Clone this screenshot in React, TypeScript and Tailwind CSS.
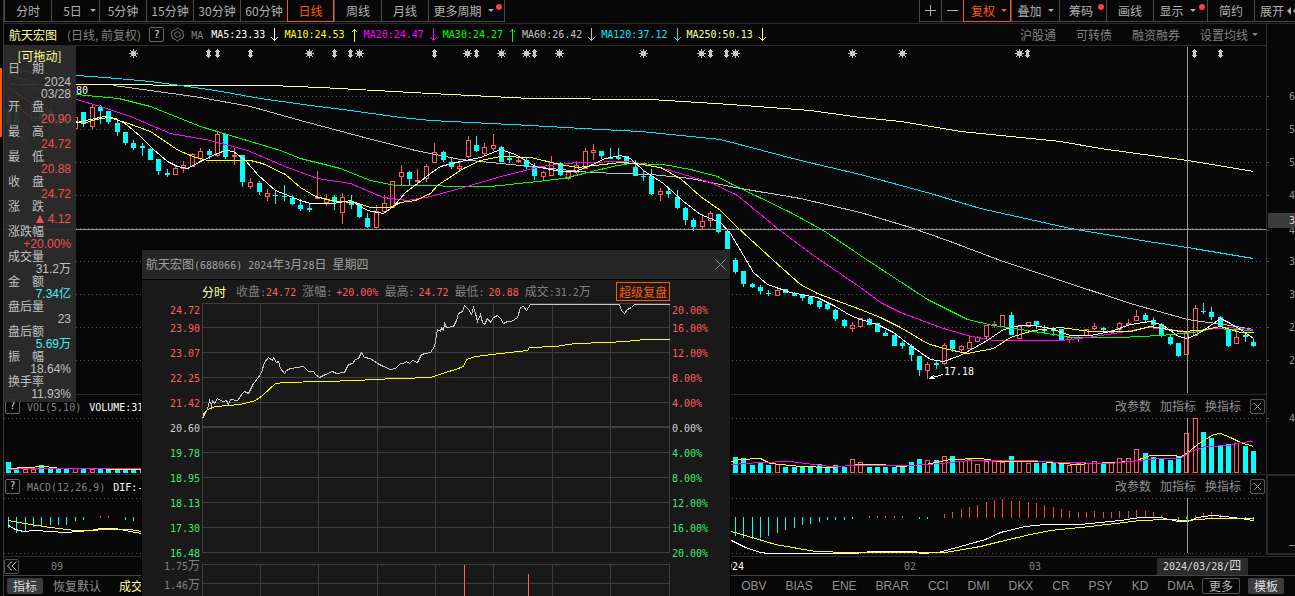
import React from "react";

type Candle = [boolean, number, number, number, number];
type Point = [number, number];

const UP = "#ff5c5c";
const DOWN = "#00ffff";

// [up, high, low, body top, body bottom]
const candles: Candle[] = [
  [false, 108, 128, 110, 125], [false, 108, 134, 110, 126], [true, 118, 146, 124, 138], [true, 100, 124, 104, 120],
  [false, 108, 126, 111, 122], [false, 106, 124, 110, 118], [false, 118, 130, 120, 126], [false, 118, 129, 122, 124],
  [true, 116, 129, 117, 128], [false, 112, 127, 112, 124], [true, 104, 129, 107, 126], [false, 105, 124, 107, 111],
  [false, 111, 124, 111, 122], [false, 121, 136, 123, 132], [false, 132, 145, 132, 143], [false, 140, 150, 143, 148],
  [false, 143, 156, 146, 148], [false, 148, 160, 149, 160], [false, 159, 175, 159, 171], [false, 169, 177, 173, 175],
  [true, 165, 174, 168, 174], [true, 161, 173, 165, 168], [true, 153, 167, 154, 166], [true, 148, 161, 151, 158],
  [false, 149, 159, 151, 155], [true, 131, 157, 134, 155], [false, 133, 159, 134, 157], [true, 148, 165, 155, 156],
  [false, 155, 187, 155, 182], [true, 178, 189, 182, 186], [false, 181, 195, 183, 192], [true, 189, 201, 193, 196],
  [false, 190, 204, 195, 196], [false, 185, 201, 196, 197], [false, 195, 205, 198, 204], [false, 199, 211, 205, 209],
  [false, 203, 212, 208, 210], [true, 171, 199, 197, 198], [true, 194, 206, 199, 202], [false, 195, 210, 197, 202],
  [true, 193, 224, 197, 212], [false, 195, 209, 201, 205], [false, 203, 218, 204, 217], [false, 213, 228, 218, 227],
  [true, 205, 227, 211, 227], [true, 195, 211, 203, 211], [true, 181, 207, 181, 207], [true, 165, 185, 172, 176],
  [false, 171, 185, 172, 179], [true, 169, 185, 180, 181], [true, 164, 182, 166, 178], [true, 143, 162, 152, 162],
  [false, 151, 162, 152, 160], [false, 158, 169, 162, 167], [true, 162, 172, 166, 168], [true, 136, 158, 140, 156],
  [false, 136, 152, 145, 151], [true, 143, 155, 147, 153], [true, 134, 151, 145, 148], [false, 146, 162, 147, 162],
  [false, 152, 163, 158, 160], [true, 156, 163, 160, 161], [false, 158, 169, 160, 167], [false, 163, 180, 166, 176],
  [true, 171, 181, 172, 176], [true, 156, 175, 162, 175], [false, 162, 176, 163, 175], [true, 170, 180, 172, 178],
  [true, 161, 174, 165, 172], [true, 148, 168, 151, 168], [true, 144, 160, 150, 152], [false, 151, 159, 151, 156],
  [false, 148, 159, 157, 159], [false, 148, 160, 157, 159], [false, 156, 164, 156, 164], [false, 160, 176, 167, 176],
  [false, 170, 181, 176, 177], [false, 169, 195, 176, 194], [true, 188, 201, 191, 194], [false, 188, 198, 191, 194],
  [false, 190, 209, 197, 208], [false, 207, 225, 208, 220], [false, 218, 231, 220, 227], [true, 214, 229, 221, 226],
  [true, 211, 227, 213, 220], [false, 214, 233, 214, 232], [false, 231, 249, 231, 249], [false, 258, 274, 260, 272],
  [false, 271, 287, 271, 284], [false, 283, 288, 284, 287], [false, 285, 294, 287, 291], [false, 290, 296, 293, 294],
  [true, 288, 295, 290, 295], [false, 289, 293, 289, 293], [false, 292, 296, 293, 296], [false, 295, 301, 295, 298],
  [false, 297, 305, 297, 304], [false, 300, 309, 301, 307], [false, 302, 310, 304, 309], [false, 309, 321, 310, 319],
  [false, 319, 328, 320, 326], [true, 322, 332, 325, 328], [true, 318, 328, 318, 326], [false, 318, 325, 319, 325],
  [false, 323, 332, 323, 332], [false, 330, 336, 333, 336], [false, 335, 346, 335, 346], [false, 341, 349, 343, 346],
  [false, 344, 361, 346, 355], [false, 356, 376, 356, 370], [true, 362, 379, 364, 370], [false, 360, 369, 363, 365],
  [true, 343, 365, 345, 363], [false, 340, 352, 340, 349], [true, 345, 352, 346, 349], [true, 335, 349, 342, 348],
  [true, 336, 342, 337, 341], [true, 325, 339, 325, 336], [true, 321, 328, 324, 325], [true, 315, 326, 315, 326],
  [false, 312, 335, 315, 335], [true, 326, 338, 326, 338], [true, 322, 326, 322, 326], [false, 321, 329, 321, 325],
  [false, 325, 333, 329, 331], [false, 327, 336, 328, 331], [false, 329, 340, 329, 340], [true, 335, 343, 337, 339],
  [true, 335, 342, 337, 338], [true, 329, 335, 329, 335], [true, 323, 330, 326, 328], [false, 327, 331, 328, 330],
  [true, 330, 334, 331, 332], [true, 322, 332, 323, 329], [true, 319, 326, 323, 324], [true, 310, 321, 316, 320],
  [false, 313, 322, 315, 320], [false, 317, 326, 320, 325], [false, 323, 337, 324, 336], [false, 335, 345, 337, 344],
  [false, 343, 357, 343, 356], [true, 332, 354, 332, 354], [true, 305, 335, 308, 335], [false, 303, 314, 311, 312],
  [false, 307, 320, 312, 317], [false, 316, 327, 317, 327], [false, 328, 347, 330, 346], [true, 330, 344, 337, 343],
  [false, 332, 342, 335, 337], [false, 338, 347, 342, 346],
];

const maLines: { color: string; points: string }[] = [
  { color: "#ffff99", points: "8,84 76,84 140,84 165,85 270,85 320,87 430,93 530,98 650,99 730,104 810,110 860,117 900,121 960,131 1010,136 1060,141 1100,148 1187,160 1253,171" },
  { color: "#00e5ff", points: "8,70 76,75 105,77 150,81 180,85 215,90 260,98 310,105 350,110 400,117 430,120 530,125 600,129 640,131 720,139 762,150 800,160 860,174 930,193 980,208 1070,228 1141,240 1187,247 1253,258" },
  { color: "#c0c0c0", points: "113,85 150,90 200,97 250,106 300,120 360,136 415,150 430,153 460,159 500,163 530,166 590,172 650,174 690,178 740,188 800,198 860,212 910,227 947,240 1000,260 1060,280 1130,303 1187,319 1230,325 1253,329" },
  { color: "#00ff00", points: "8,74 40,84 76,94 118,98 150,106 200,126 280,150 300,158 340,168 370,180 395,185 430,185 455,186 490,186 537,181 563,178 583,173 617,165 630,163 663,164 690,169 717,176 730,183 757,196 790,212 823,230 860,255 927,299 967,319 993,325 1040,332 1073,337 1120,337 1160,335 1193,332 1213,328 1253,330" },
  { color: "#ff00ff", points: "8,82 50,91 76,99 100,106 130,116 170,133 210,140 247,150 287,167 317,178 350,183 383,197 407,200 430,196 463,187 497,177 540,166 577,162 630,161 663,168 710,182 737,195 777,228 813,255 860,287 880,302 900,312 940,327 967,335 993,340 1060,340 1087,337 1120,332 1147,327 1187,331 1227,327 1253,329" },
  { color: "#ffff00", points: "8,87 30,102 60,116 76,121 83,123 95,119 108,117 125,122 150,131 178,150 195,157 208,160 250,160 262,163 285,174 300,187 315,196 335,201 355,202 370,207 390,207 400,202 415,200 430,193 437,185 463,168 480,160 500,156 530,157 560,164 577,167 620,162 635,163 660,167 680,178 700,196 720,210 737,227 760,248 773,260 800,284 817,293 833,299 860,309 880,317 900,327 927,343 943,348 967,353 993,348 1010,337 1033,330 1060,327 1090,331 1130,331 1150,326 1180,331 1200,330 1220,326 1240,332 1253,332" },
  { color: "#ffffff", points: "8,98 30,117 60,120 76,122 104,116 115,118 126,124 140,136 153,149 167,161 177,166 187,168 200,161 217,153 225,150 233,151 245,160 258,175 275,190 300,200 310,203 333,203 350,200 367,210 383,213 393,206 405,192 417,183 430,173 440,166 460,161 480,157 500,149 515,154 535,166 560,171 575,171 590,165 605,158 620,155 630,158 643,170 663,183 683,201 700,214 720,222 730,233 743,255 753,272 767,284 790,292 817,297 835,306 850,315 860,319 877,324 893,332 910,345 930,359 943,361 960,355 985,341 1003,329 1020,325 1033,325 1050,328 1070,335 1090,335 1110,331 1130,324 1150,321 1163,325 1178,336 1187,338 1200,332 1213,323 1220,318 1230,323 1243,331 1253,338" },
];

const volumeLeft = [462, 468, 469, 469, 465, 469, 468, 469, 468, 469, 469, 469, 468, 468, 468, 468, 469];
const volumeRight = [
  457, 458, 465, 462, 465, 464, 467, 467, 467, 467, 464, 467, 465, 467, 459, 462, 467, 467, 467, 467, 467, 462, 459,
  460, 460, 456, 456, 461, 459, 464, 461, 461, 462, 456, 460, 463, 463, 463, 462, 463, 465, 463, 463, 461, 463, 463,
  458, 458, 449, 453, 457, 458, 460, 456, 433, 418, 432, 438, 445, 444, 443, 446, 451,
];
const volumes: Point[] = [
  ...volumeLeft.map((y, i): Point => [i, y]),
  ...volumeRight.map((y, i): Point => [i + 87, y]),
];

const macdBars: Point[] = [
  [0, 527], [1, 532], [2, 531], [3, 526], [4, 526], [5, 524], [6, 524], [7, 524], [8, 520], [9, 519],
  [11, 516], [12, 516], [14, 519], [15, 520],
  [87, 535], [88, 537], [89, 538], [90, 537], [91, 535], [92, 532], [93, 529], [94, 527], [95, 524], [96, 523],
  [97, 521], [98, 519], [99, 519], [100, 519], [101, 518], [103, 516], [104, 516], [105, 516], [106, 516], [107, 516],
  [109, 518], [110, 518], [112, 514], [113, 512], [114, 509], [115, 507], [116, 505], [117, 502], [118, 500],
  [119, 499], [120, 501], [121, 501], [122, 502], [123, 503], [124, 505], [125, 507], [126, 509], [127, 511],
  [128, 512], [129, 512], [130, 511], [131, 512], [132, 512], [133, 511], [134, 511], [135, 510], [136, 511],
  [137, 512], [138, 515], [140, 520], [141, 518], [142, 515], [143, 513], [144, 512], [145, 514], [147, 518],
  [148, 519], [149, 520],
];

const suns = [133, 309, 359, 467, 501, 526, 559, 643, 701, 735, 852, 902, 1019];
const arrowsUpDown = [208, 217, 250, 334, 350, 434, 476, 534, 710, 726, 1027, 1194, 1220];
const gridRows = [96, 129, 162, 195, 228, 261, 294, 327, 360];

const barX = (i: number) => Math.round(8 + i * 8.357);

// CJK runs at 12px, everything else in a half-width mono face
function Mixed({ text }: { text: string }) {
  const parts = text.split(/([\u3000-\u9fff\uff00-\uffef]+)/).filter(Boolean);
  return (
    <>
      {parts.map((p, i) =>
        /[\u3000-\u9fff\uff00-\uffef]/.test(p) ? (
          <span key={i}>{p}</span>
        ) : (
          <span key={i} className="font-['DejaVu_Sans_Mono',monospace] text-[10px] whitespace-pre">{p}</span>
        )
      )}
    </>
  );
}

function Caret() {
  return <span className="border-x-[3px] border-t-[3px] border-x-transparent border-t-current" />;
}

function Dot() {
  return <span className="absolute top-1 right-0.5 size-1.5 rounded-full bg-[#ff4040]" />;
}

function Arrow({ up }: { up?: boolean }) {
  return (
    <svg width="7" height="14" viewBox="0 0 7 14" fill="none" stroke="currentColor" shapeRendering="crispEdges">
      <path d={up ? "M3.5 14V1M0.5 4.5L3.5 1.5L6.5 4.5" : "M3.5 0V13M0.5 9.5L3.5 12.5L6.5 9.5"} />
    </svg>
  );
}

function Help() {
  return (
    <button
      aria-label="帮助"
      className="flex size-[15px] items-center justify-center rounded-xs border border-[#666] font-['DejaVu_Sans_Mono',monospace] text-[10px] text-[#ddd]"
    >
      ?
    </button>
  );
}

const periods = ["分时", "5日", "5分钟", "15分钟", "30分钟", "60分钟", "日线", "周线", "月线"];

const tools = [
  { label: "复权", width: "w-12 pl-1", caret: true, active: true },
  { label: "叠加", width: "w-12", caret: true },
  { label: "筹码", width: "w-[47px] pr-1", dot: true },
  { label: "画线", width: "w-[47px]" },
  { label: "显示", width: "w-[54px] pr-1.5", caret: true, dot: true },
  { label: "简约", width: "w-[47px]" },
];

function Toolbar() {
  const base = "relative flex shrink-0 items-center justify-center h-[22px] whitespace-nowrap ";
  const idle = "border-l border-b border-[#4a4a4a] text-[#b0b0b0]";
  const active = "border border-t-0 border-[#ff5a00] text-[#ff5a00]";
  return (
    <nav className="flex h-6 justify-between overflow-hidden border-b border-[#2a2a2a]">
      <div className="flex">
        {periods.map(p => (
          <button
            key={p}
            className={base + "gap-2 " + (p === "5日" ? "w-12 pl-2 " : "w-[47px] ") + (p === "日线" ? active : idle)}
          >
            {p}
            {p === "5日" && <Caret />}
          </button>
        ))}
        <button className={base + "w-[77px] gap-1.5 border-r pr-1.5 " + idle}>
          更多周期
          <Caret />
          <Dot />
        </button>
      </div>
      <div className="flex">
        <button aria-label="放大" className={base + "w-[22px] " + idle}>
          <svg width="11" height="11" stroke="currentColor" shapeRendering="crispEdges"><path d="M5.5 0V11M0 5.5H11" /></svg>
        </button>
        <button aria-label="缩小" className={base + "w-[22px] " + idle}>
          <svg width="11" height="11" stroke="currentColor" shapeRendering="crispEdges"><path d="M0 5.5H11" /></svg>
        </button>
        {tools.map(t => (
          <button key={t.label} className={base + "gap-1.5 " + t.width + " " + (t.active ? active : idle)}>
            {t.label}
            {t.caret && <Caret />}
            {t.dot && <Dot />}
          </button>
        ))}
        <button className={base + "w-[41px] justify-start gap-0.5 overflow-hidden pl-[5px] " + idle}>
          展开
          <svg className="shrink-0" width="12" height="8" fill="currentColor"><path d="M5 0V8L1 4ZM11 0V8L7 4Z" /></svg>
        </button>
      </div>
    </nav>
  );
}

const averages = [
  { text: "MA5:23.33", color: "text-white" },
  { text: "MA10:24.53", color: "text-[#ffff00]", up: true },
  { text: "MA20:24.47", color: "text-[#ff00ff]" },
  { text: "MA30:24.27", color: "text-[#00ff00]", up: true },
  { text: "MA60:26.42", color: "text-[#c0c0c0]" },
  { text: "MA120:37.12", color: "text-[#00e5ff]" },
  { text: "MA250:50.13", color: "text-[#ffff99]" },
];

function IndicatorRow() {
  return (
    <div className="flex h-[22px] items-center border-b border-[#2a2a2a] pr-2 pl-[5px] whitespace-nowrap">
      <h1 className="text-[#ffffa0]">航天宏图</h1>
      <span className="mr-2 ml-2.5 text-[#808080]">(日线, 前复权)</span>
      <Help />
      <button aria-label="设置" className="mx-1.5">
        <svg width="15" height="15" viewBox="0 0 15 15" fill="none" stroke="#777">
          <path d="M7.5 1L9.5 2.5L13 4V7L13.5 8L13 11L9.5 12.5L7.5 14L5.5 12.5L2 11V8L1.5 7L2 4L5.5 2.5Z" />
          <circle cx="7.5" cy="7.5" r="2.8" />
        </svg>
      </button>
      <span className="mr-2 text-[#808080]"><Mixed text="MA" /></span>
      {averages.map(a => (
        <span key={a.text} className={"mr-1.5 flex items-center gap-1.5 " + a.color}>
          <Mixed text={a.text} />
          <Arrow up={a.up} />
        </span>
      ))}
      <div className="ml-auto flex gap-5 text-[#808080]">
        <a href="#hgt">沪股通</a>
        <a href="#kzz">可转债</a>
        <a href="#rzrq">融资融券</a>
        <button className="flex items-center gap-1">设置均线<Caret /></button>
      </div>
    </div>
  );
}

function PriceChart() {
  return (
    <svg className="block h-full w-full" viewBox="4 46 1262 348" preserveAspectRatio="none" shapeRendering="crispEdges">
      {gridRows.map(y => (
        <line key={y} x1="4" x2="1263" y1={y + 0.5} y2={y + 0.5} stroke="#555" strokeDasharray="1 3" />
      ))}
      {suns.map(x => (
        <g key={x} stroke="#c8c8c8">
          <path d={`M${x + 0.5} 49V58M${x - 4} 53.5H${x + 5}M${x - 3} 50L${x + 4} 57M${x + 4} 50L${x - 3} 57`} />
          <rect x={x - 2} y="51" width="5" height="5" fill="#c8c8c8" stroke="none" />
        </g>
      ))}
      {arrowsUpDown.map(x => (
        <path key={x} fill="#c8c8c8" d={`M${x + 0.5} 49L${x + 3} 52H${x + 2}V55H${x + 3}L${x + 0.5} 58L${x - 2} 55H${x - 1}V52H${x - 2}Z`} />
      ))}
      {candles.map(([up, high, low, top, bottom], i) => {
        const x = barX(i);
        const h = Math.max(bottom - top, 1);
        return up ? (
          <g key={i} fill="none" stroke={UP}>
            <path d={`M${x + 0.5} ${high}V${top}M${x + 0.5} ${bottom}V${low}`} />
            <rect x={x - 1.5} y={top + 0.5} width="4" height={h} />
          </g>
        ) : (
          <g key={i} fill={DOWN}>
            <rect x={x} y={high} width="1" height={low - high} />
            <rect x={x - 2} y={top} width="5" height={h} />
          </g>
        );
      })}
      <g fill="none" transform="translate(0.5 0.5)">
        {maLines.map(l => (
          <polyline key={l.color} points={l.points} stroke={l.color} />
        ))}
      </g>
      <text x="76" y="94" fill="#fff" className="font-['DejaVu_Sans_Mono',monospace] text-[10px]">80</text>
      <path d="M929 378.5L943 374.5M929 378.5L934 375.5M929 378.5H935" stroke="#fff" fill="none" />
      <text x="944" y="375" fill="#fff" className="font-['DejaVu_Sans_Mono',monospace] text-[10px]">17.18</text>
      <path d="M4 229.5H1266M1187.5 47V393" stroke="#999" />
    </svg>
  );
}

function VolumeChart() {
  return (
    <svg className="block h-14 w-full" viewBox="4 418 1262 56" preserveAspectRatio="none" shapeRendering="crispEdges">
      <path d="M4 418.5H1263M4 472.5H1263" stroke="#555" strokeDasharray="1 3" />
      {volumes.map(([i, y]) =>
        candles[i][0] ? (
          <rect key={i} x={barX(i) - 1.5} y={y + 0.5} width="4" height={472 - y} fill="none" stroke={UP} />
        ) : (
          <rect key={i} x={barX(i) - 2} y={y} width="5" height={473 - y} fill={DOWN} />
        )
      )}
      <g fill="none" transform="translate(0.5 0.5)">
        <polyline stroke="#ffff00" points="8,468 25,467 45,466 60,468 90,468 120,469 141,469 731,461 740,459 760,458 770,463 800,466 830,467 860,464 880,464 900,466 925,464 950,459 980,458 1000,461 1040,461 1075,464 1110,462 1133,461 1150,455 1175,455 1180,457 1190,450 1197,444 1205,439 1213,434 1220,433 1230,437 1240,442 1253,446" />
        <polyline stroke="#ff00ff" points="8,469 30,468 90,468 141,468 731,464 760,462 790,461 805,463 830,466 860,465 910,465 940,463 970,460 1030,460 1060,462 1110,463 1130,461 1160,458 1180,458 1190,451 1205,446 1230,445 1240,442 1253,441" />
      </g>
      <path d="M1187.5 418V472" stroke="#999" />
    </svg>
  );
}

function MacdChart() {
  return (
    <svg className="block h-[58px] w-full" viewBox="4 498 1262 58" preserveAspectRatio="none" shapeRendering="crispEdges">
      <path d="M4 498.5H1263M4 553.5H1263" stroke="#555" strokeDasharray="1 3" />
      {macdBars.map(([i, y]) =>
        y < 517 ? (
          <rect key={i} x={barX(i)} y={y} width="1" height={518 - y} fill="#ff3c3c" />
        ) : (
          <rect key={i} x={barX(i)} y="517" width="1" height={y - 516} fill={DOWN} />
        )
      )}
      <g fill="none" transform="translate(0.5 0.5)">
        <polyline stroke="#fff" points="8,525 15,529 23,531 35,530 65,532 90,530 100,528 115,528 130,531 141,533 731,540 745,547 760,552 768,553 795,553 855,553 870,551 915,551 920,553 938,552 960,546 985,539 1000,532 1025,526 1045,524 1080,524 1110,521 1120,520 1140,517 1160,517 1178,521 1187,521 1197,517 1211,515 1225,516 1240,518 1253,520" />
        <polyline stroke="#ffff00" points="8,520 30,524 50,527 75,530 85,530 110,529 130,529 141,531 731,531 755,538 775,544 815,551 850,552 920,552 945,552 980,546 1000,541 1030,534 1050,530 1080,527 1115,523 1140,520 1165,519 1187,520 1210,518 1253,518" />
      </g>
      <path d="M1187.5 498V553" stroke="#999" />
    </svg>
  );
}

function SubHeader({ name, value }: { name: string; value: string }) {
  return (
    <div className="flex h-6 items-center border-t border-[#2a2a2a] pr-px pb-px pl-px whitespace-nowrap">
      <Help />
      <span className="ml-[7px] text-[#808080]"><Mixed text={name} /></span>
      <span className="ml-2 text-white"><Mixed text={value} /></span>
      <div className="ml-auto flex items-center gap-[9px] text-[#909090]">
        <button>改参数</button>
        <button>加指标</button>
        <button>换指标</button>
        <button aria-label="关闭指标" className="flex size-[15px] items-center justify-center rounded-xs border border-[#555]">
          <svg width="9" height="9" stroke="#909090"><path d="M1 1L8 8M8 1L1 8" /></svg>
        </button>
      </div>
    </div>
  );
}

const axisLabels: [string, number][] = [
  ["6", 96], ["5", 129], ["5", 162], ["4", 195], ["4", 230], ["3", 261], ["3", 294], ["2", 327], ["2", 360], ["4", 418],
];

function PriceAxis() {
  return (
    <svg className="block h-full w-[29px] shrink-0" viewBox="1266 24 29 532" preserveAspectRatio="none" shapeRendering="crispEdges">
      <path d="M1266.5 24V473" stroke="#333" />
      {axisLabels.map(([t, y]) => (
        <g key={y}>
          <path d={`M1267 ${y + 0.5}H1269`} stroke="#555" />
          <text x="1289" y={y + 4} fill="#909090" className="font-['DejaVu_Sans_Mono',monospace] text-[10px]">{t}</text>
        </g>
      ))}
      <rect x="1268" y="213" width="27" height="15" fill="#3c3c3c" />
      <text x="1289" y="224" fill="#d0d0d0" className="font-['DejaVu_Sans_Mono',monospace] text-[10px]">3</text>
      <path d="M1295 475H1267V554H1295" fill="none" stroke="#2a2a2a" strokeWidth="2" />
      <path d="M1289 545.5H1295" stroke="#909090" />
    </svg>
  );
}

function DateAxis() {
  return (
    <div className="flex h-[19px] items-center border-t border-[#2a2a2a]">
      <button aria-label="向前" className="flex size-[15px] shrink-0 items-center justify-center rounded-xs border border-[#555]">
        <svg width="10" height="10" fill="none" stroke="#ccc"><path d="M5 0.5L0.5 5L5 9.5M9.5 0.5L5 5L9.5 9.5" /></svg>
      </button>
      <svg className="h-[18px] min-w-0 flex-1 font-['DejaVu_Sans_Mono',monospace] text-[10px]" viewBox="19 557 1276 18" preserveAspectRatio="none" fill="#808080">
        <text x="51" y="570">09</text>
        <text x="720" y="570" fill="#fff">2024</text>
        <text x="904" y="570">02</text>
        <text x="1029" y="570">03</text>
        <rect x="1157" y="558" width="91" height="17" fill="#2b2b2b" />
        <text x="1163" y="570" fill="#ddd">
          2024/03/28/<tspan className="font-['Noto_Sans_CJK_SC',sans-serif] text-xs">四</tspan>
        </text>
      </svg>
    </div>
  );
}

const indicators = ["OBV", "BIAS", "ENE", "BRAR", "CCI", "DMI", "DKX", "CR", "PSY", "KD", "DMA"];

function IndicatorTabs() {
  return (
    <div className="flex h-[21px] items-center border-t border-[#444] pr-[11px] pl-[3px] whitespace-nowrap text-[#909090]">
      <button className="h-4 rounded-xs bg-[#3c3c3c] px-1.5 leading-4 text-[#ddd]">指标</button>
      <button className="ml-2.5">恢复默认</button>
      <button className="ml-[18px] text-[#ffff99]">成交量</button>
      <div className="ml-auto flex gap-[19px] font-['Liberation_Sans',sans-serif]">
        {indicators.map(n => <button key={n}>{n}</button>)}
      </div>
      <button className="ml-2 h-4 rounded-xs border border-[#555] px-1.5 leading-3 text-[#bbb]">更多</button>
      <button className="ml-2 h-4 rounded-xs bg-[#3c3c3c] px-1.5 leading-4 text-[#ddd]">模板</button>
    </div>
  );
}

const quote: { label: string; value: string; color: string; rise?: boolean }[] = [
  { label: "开　盘", value: "20.90", color: "text-[#f05050]" },
  { label: "最　高", value: "24.72", color: "text-[#f05050]" },
  { label: "最　低", value: "20.88", color: "text-[#f05050]" },
  { label: "收　盘", value: "24.72", color: "text-[#f05050]" },
  { label: "涨　跌", value: "4.12", color: "text-[#f05050]", rise: true },
  { label: "涨跌幅", value: "+20.00%", color: "text-[#f05050]" },
  { label: "成交量", value: "31.2万", color: "text-[#c0c0c0]" },
  { label: "金　额", value: "7.34亿", color: "text-[#40f0f0]" },
  { label: "盘后量", value: "23", color: "text-[#c0c0c0]" },
  { label: "盘后额", value: "5.69万", color: "text-[#40f0f0]" },
  { label: "振　幅", value: "18.64%", color: "text-[#c0c0c0]" },
  { label: "换手率", value: "11.93%", color: "text-[#c0c0c0]" },
];

function QuotePanel() {
  const dd = "text-right font-['Liberation_Sans','Noto_Sans_CJK_SC',sans-serif] ";
  return (
    <aside className="absolute top-[46px] left-0 w-[72px] bg-[#2c2c2c]/95 pt-1 pr-[5px] pb-0.5 pl-1">
      <h2 className="text-center leading-3 text-[#ffff99]">[可拖动]</h2>
      <dl>
        <dt className="leading-3 text-[#c0c0c0]">日　期</dt>
        <dd className={dd + "pt-0.5 leading-3 text-[#c0c0c0]"}>2024<br />03/28</dd>
        {quote.map(q => (
          <React.Fragment key={q.label}>
            <dt className="leading-3 text-[#c0c0c0]">{q.label}</dt>
            <dd className={dd + "pt-px leading-3 " + q.color}>
              {q.rise && <svg className="mr-1 inline-block align-baseline" width="8" height="8" fill="currentColor"><path d="M4 0L8 8H0Z" /></svg>}
              {q.value}
            </dd>
          </React.Fragment>
        ))}
      </dl>
    </aside>
  );
}

const priceLabels = ["23.90", "23.07", "22.25", "21.42", "20.60", "19.78", "18.95", "18.13", "17.30"];
const percentLabels = ["16.00%", "12.00%", "8.00%", "4.00%", "0.00%", "4.00%", "8.00%", "12.00%", "16.00%"];

const tone = (i: number) => (i < 4 ? "text-[#ff5c5c]" : i === 4 ? "text-[#d0d0d0]" : "text-[#40e870]");

function ScaleColumn({ first, rows, last, children }: { first: string; rows: string[]; last: string; children?: React.ReactNode }) {
  return (
    <div className="leading-3">
      <div className="h-[18px] text-[#ff5c5c]"><Mixed text={first} /></div>
      {rows.map((r, i) => (
        <div key={i} className={"h-[25px] " + tone(i)}><Mixed text={r} /></div>
      ))}
      <div className="h-[13px] text-[#40e870]"><Mixed text={last} /></div>
      {children}
    </div>
  );
}

function MinuteChart() {
  const rows = [303, 327, 352, 377, 402, 452, 477, 502, 527, 552, 564, 583];
  const cols = [202, 260, 318, 377, 435, 493, 552, 610, 669];
  return (
    <svg className="block h-[293px] w-full" viewBox="202 303 468 293" preserveAspectRatio="none" shapeRendering="crispEdges">
      {rows.map(y => <path key={y} d={`M202 ${y + 0.5}H670`} stroke="#3e3e3e" />)}
      {cols.map(x => <path key={x} d={`M${x + 0.5} 303V552M${x + 0.5} 564V596`} stroke="#3e3e3e" />)}
      <path d="M202 427H670" stroke="#3e3e3e" strokeWidth="2" />
      <path d="M464.5 565V596M528.5 574V596" stroke={UP} />
      <g fill="none" transform="translate(0.5 0.5)">
        <polyline stroke="#ffff00" points="202,415 207,409 215,406 240,404 255,400 262,395 275,383 285,382 320,381 360,380 370,379 430,377 445,372 455,369 463,366 466,359 475,356 500,353 527,350 529,347 555,346 575,343 607,342 625,341 645,339 669,339" />
        <polyline stroke="#c8c8c8" points="202,418 204,414 207,409 209,400 211,405 212,400 214,403 217,398 220,400 223,401 226,400 228,404 230,399 237,400 242,393 244,391 248,393 253,383 258,377 261,372 264,362 268,357 272,360 273,357 276,362 278,361 280,368 284,373 286,370 290,368 297,367 303,366 308,371 313,371 315,374 319,377 325,374 332,371 336,373 344,372 348,364 352,363 355,359 358,358 361,352 364,357 370,358 377,363 383,366 390,369 395,368 400,363 403,363 406,361 409,363 412,360 417,362 421,354 425,353 430,352 434,346 436,335 437,329 440,331 441,327 443,330 444,323 446,327 453,326 456,320 458,313 462,311 464,305 468,309 471,314 473,307 475,313 477,321 480,314 482,322 484,324 487,318 490,322 493,317 497,315 500,318 503,323 507,321 511,321 517,317 520,307 523,306 526,310 530,304 619,304 621,310 624,313 627,309 631,307 634,304 669,304" />
      </g>
    </svg>
  );
}

const dayStats = [
  { label: "涨幅:", value: "+20.00%" },
  { label: "最高:", value: "24.72" },
  { label: "最低:", value: "20.88" },
];

function ReplayWindow() {
  return (
    <section className="absolute bottom-0 left-[137px] w-[590px] border border-b-0 border-black bg-[#191919] whitespace-nowrap">
      <header className="flex h-[30px] items-center justify-between border-b border-black bg-[#262626] pr-1 pl-1 text-[#a0a0a0]">
        <h2><Mixed text="航天宏图(688066) 2024年3月28日 星期四" /></h2>
        <button aria-label="关闭">
          <svg width="11" height="11" stroke="#909090"><path d="M0.5 0.5L10.5 10.5M10.5 0.5L0.5 10.5" /></svg>
        </button>
      </header>
      <div className="flex h-[23px] items-center gap-1.5 pr-[60px] pl-[60px] text-[#808080]">
        <strong className="mr-1 font-normal text-[#ffff99]">分时</strong>
        <span>
          <Mixed text="收盘:" />
          <span className="text-[#ff5c5c]"><Mixed text="24.72" /></span>
        </span>
        {dayStats.map(s => (
          <span key={s.label}>
            <Mixed text={s.label} />
            <span className="ml-1 text-[#ff5c5c]"><Mixed text={s.value} /></span>
          </span>
        ))}
        <span><Mixed text="成交:31.2万" /></span>
        <button className="ml-auto h-[19px] border border-[#ff5a00] px-0.5 leading-4 text-[#ff5a00]">超级复盘</button>
      </div>
      <div className="flex">
        <div className="w-[60px] pr-0.5 text-right">
          <ScaleColumn first="24.72" rows={priceLabels} last="16.48">
            <div className="h-[19px] text-[#808080]"><Mixed text="1.75万" /></div>
            <div className="text-[#808080]"><Mixed text="1.46万" /></div>
          </ScaleColumn>
        </div>
        <div className="min-w-0 flex-1"><MinuteChart /></div>
        <div className="w-[60px] pl-0.5">
          <ScaleColumn first="20.00%" rows={percentLabels} last="20.00%" />
        </div>
      </div>
    </section>
  );
}

export default function App() {
  return (
    <div className="flex h-screen overflow-hidden bg-[#070707] font-['Noto_Sans_CJK_SC',sans-serif] text-xs">
      <div className="w-1 shrink-0 border-r border-[#3a3a3a] pt-[68px]">
        <div className="h-[69px] w-0.5 bg-[#ff5a00]" />
      </div>
      <main className="relative flex min-w-0 flex-1 flex-col">
        <Toolbar />
        <div className="flex min-h-0 flex-1">
          <div className="flex min-w-0 flex-1 flex-col">
            <IndicatorRow />
            <div className="min-h-0 flex-1"><PriceChart /></div>
            <SubHeader name="VOL(5,10)" value="VOLUME:312000" />
            <VolumeChart />
            <SubHeader name="MACD(12,26,9)" value="DIF:-0.42" />
            <MacdChart />
          </div>
          <PriceAxis />
        </div>
        <DateAxis />
        <IndicatorTabs />
        <QuotePanel />
        <ReplayWindow />
      </main>
    </div>
  );
}
